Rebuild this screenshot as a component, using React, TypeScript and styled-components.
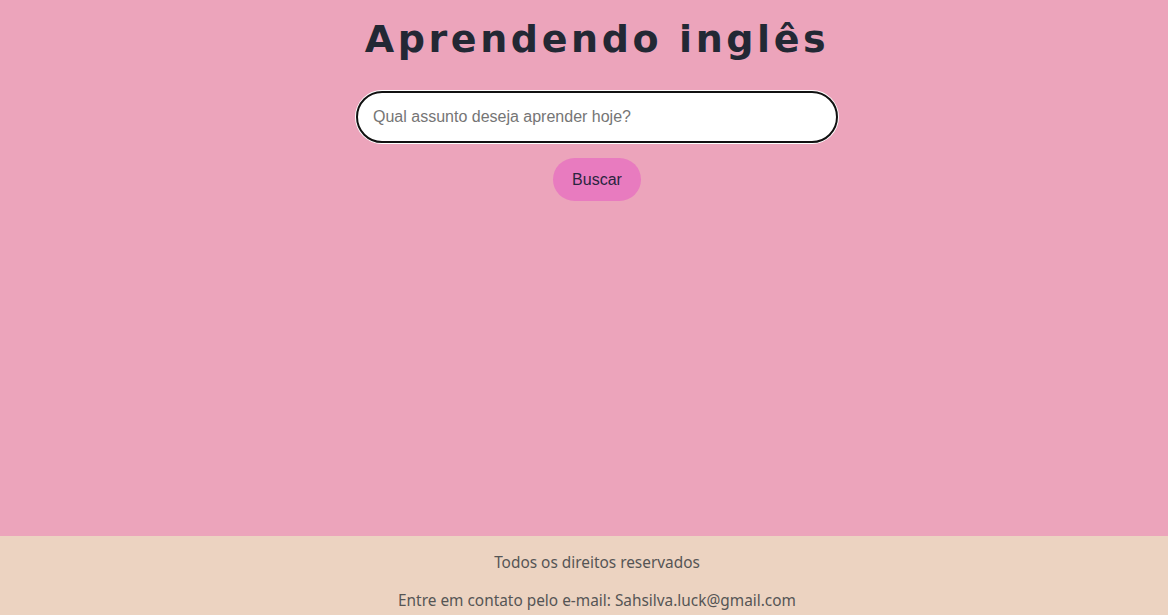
import { FC, ReactElement } from 'react';
import styled, { createGlobalStyle } from 'styled-components';

const GlobalStyle = createGlobalStyle`
    html, body {
        margin: 0;
        padding: 0;
    }

    body {
        background: #eca4bb;
        font-family: "Liberation Sans", Arial, sans-serif;
    }
`;

const Page = styled.div`
    min-height: 615px;
    display: flex;
    flex-direction: column;
`;

const Main = styled.main`
    flex: 0 0 536px;
    display: flex;
    flex-direction: column;
    align-items: center;
    padding: 15px 0 0 26px;
    box-sizing: border-box;
`;

const Title = styled.h1`
    margin: 0;
    font-family: "DejaVu Sans", sans-serif;
    font-weight: 700;
    font-size: 38px;
    line-height: 48px;
    letter-spacing: 3.6px;
    color: #232834;
`;

const SearchInput = styled.input`
    margin-top: 28px;
    width: 482px;
    height: 52px;
    box-sizing: border-box;
    border: 2px solid #111;
    border-radius: 26px;
    box-shadow: 0 0 0 1px #ffffff;
    background: #ffffff;
    padding: 0 15px;
    font-family: "Liberation Sans", Arial, sans-serif;
    font-size: 16px;
    color: #333;
    outline: none;

    &::placeholder {
        color: #757575;
    }
`;

const SearchButton = styled.button`
    margin-top: 15px;
    width: 88px;
    height: 43px;
    border: none;
    border-radius: 22px;
    background: #e87bbf;
    color: #2a2540;
    font-family: "Liberation Sans", Arial, sans-serif;
    font-size: 16px;
    cursor: pointer;
`;

const Footer = styled.footer`
    flex: 1;
    background: #ecd3c1;
    display: flex;
    flex-direction: column;
    align-items: center;
    gap: 19px;
    padding: 17px 0 8px 26px;

    p {
        margin: 0;
        font-family: "Noto Sans", sans-serif;
        font-size: 15.4px;
        line-height: 19px;
        color: #555;
    }
`;

const App: FC = (): ReactElement => {
    return (
        <Page>
            <GlobalStyle />
            <Main>
                <Title>Aprendendo inglês</Title>
                <SearchInput type='text' placeholder='Qual assunto deseja aprender hoje?' />
                <SearchButton>Buscar</SearchButton>
            </Main>
            <Footer>
                <p>Todos os direitos reservados</p>
                <p>Entre em contato pelo e-mail: Sahsilva.luck@gmail.com</p>
            </Footer>
        </Page>
    );
};

export default App;
